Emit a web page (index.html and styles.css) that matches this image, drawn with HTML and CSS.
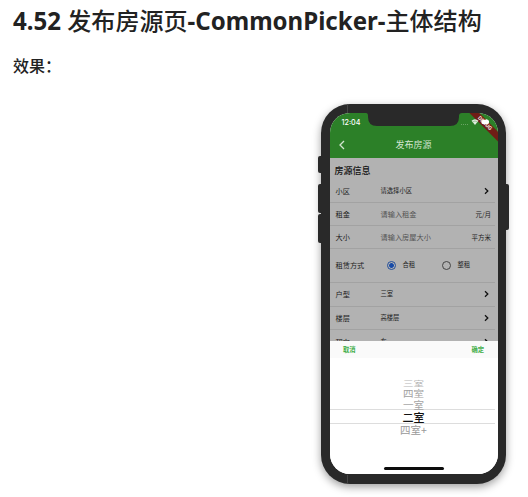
FILE: index.html
```html
<!DOCTYPE html>
<html lang="zh-CN">
<head>
<meta charset="utf-8">
<title>发布房源页</title>
<link rel="stylesheet" href="styles.css">
</head>
<body>
<h1>4.52 <span class="cjk">发布房源页</span>-CommonPicker-<span class="cjk">主体结构</span></h1>
<p class="label">效果：</p>
<div class="phone">
  <i class="key mute"></i><i class="key up"></i><i class="key down"></i><i class="key power"></i>
  <i class="seam seam-top"></i><i class="seam seam-bottom"></i>
  <div class="screen">
    <i class="debug"><b>DEBUG</b></i>
    <svg class="notch" width="96" height="14" viewBox="0 0 96 14"><path d="M0 0Q2 0 2 3V4Q2 13 11 13H84Q93 13 93 4V3Q93 0 96 0Z" fill="#292929"/></svg>
    <header>
      <div class="status">
        <span>12:04</span>
        <svg width="31" height="10" viewBox="0 0 31 10">
          <path d="M0 7.5h1m1 0h1m1 0h1m1 0h1" stroke="#69a363" stroke-width="1"/>
          <path d="M10.5 3.8Q14 .8 17.5 3.8L14 8Z" fill="#fff" opacity=".85"/>
          <path d="M11.5 5Q14 3 16.5 5" fill="none" stroke="#60a15b" stroke-width=".5"/>
          <path d="M20.5 4.5q0-1.5 1.5-1.5h2q1.5-1.6 3 0q1 .3 1 1.5v1q0 1.5-1.5 1.5H22q-1.5 0-1.5-1.5Z" fill="#fff"/>
        </svg>
      </div>
      <div class="nav">
        <svg width="8" height="10" viewBox="0 0 8 10"><path d="M6 1L2 5L6 9" fill="none" stroke="#d3e5d1" stroke-width="1.3"/></svg>
        <span>发布房源</span>
      </div>
    </header>
    <main>
      <h2>房源信息</h2>
      <div class="row first"><span class="name">小区</span><span class="value">请选择小区</span><svg class="arrow" viewBox="0 0 5 8"><path d="M1 1.3L3.8 4L1 6.7"/></svg></div>
      <div class="row"><span class="name">租金</span><span class="value hint">请输入租金</span><span class="unit">元/月</span></div>
      <div class="row"><span class="name">大小</span><span class="value hint">请输入房屋大小</span><span class="unit">平方米</span></div>
      <div class="row tall"><span class="name">租赁方式</span>
        <div class="options"><i class="radio on"></i><span>合租</span><i class="radio"></i><span>整租</span></div></div>
      <div class="row pick"><span class="name">户型</span><span class="value">三室</span><svg class="arrow" viewBox="0 0 5 8"><path d="M1 1.3L3.8 4L1 6.7"/></svg></div>
      <div class="row pick"><span class="name">楼层</span><span class="value">高楼层</span><svg class="arrow" viewBox="0 0 5 8"><path d="M1 1.3L3.8 4L1 6.7"/></svg></div>
      <div class="row last"><span class="name">朝向</span><span class="value">东</span><svg class="arrow" viewBox="0 0 5 8"><path d="M1 1.3L3.8 4L1 6.7"/></svg></div>
    </main>
    <section class="sheet">
      <div class="bar"><span>取消</span><span>确定</span></div>
      <div class="wheel">
        <div class="far">三室</div>
        <div class="mid">四室</div>
        <div class="near">一室</div>
        <div class="current">二室</div>
        <div class="next">四室+</div>
      </div>
      <div class="home"></div>
    </section>
  </div>
</div>
</body>
</html>
```
FILE: styles.css
```css
* { box-sizing: border-box; }
html, body { height: 497px; overflow: hidden; }
body {
  margin: 0;
  padding: 4px 22px 0 13px;
  background: #fff;
  color: #222;
  font-family: "Noto Sans", "Noto Sans CJK SC", sans-serif;
}
h1 { margin: 0; height: 32px; font-size: 24.05px; line-height: 32px; font-weight: 700; white-space: nowrap; }
.cjk { font-family: "Noto Sans CJK SC", sans-serif; font-weight: 500; }
.label { margin: 17px 0 0; height: 24px; font: 500 16px/24px "Noto Sans CJK SC", sans-serif; }

.phone {
  position: relative;
  width: 185px;
  height: 380px;
  margin: 27px 0 0 auto;
  padding: 9px 8.5px 9.5px;
  border-radius: 29px;
  background: #292929;
  box-shadow: 0 3px 9px rgba(0, 0, 0, .38);
}
.key { position: absolute; left: -3px; width: 5px; border-radius: 2px; background: #292929; }
.mute { top: 52px; height: 17px; }
.up { top: 80px; height: 29px; }
.down { top: 110px; height: 29px; }
.power { left: auto; right: -2.5px; top: 80px; height: 46px; }
.seam { position: absolute; left: 26px; width: 1px; height: 9px; background: #454545; }
.seam-top { top: 0; }
.seam-bottom { bottom: 0; }

.screen {
  position: relative;
  display: flex;
  flex-direction: column;
  height: 361px;
  overflow: hidden;
  border-radius: 20px;
  background: #fff;
}
.notch { position: absolute; top: 0; left: 36px; }
.debug {
  position: absolute;
  top: 7px;
  right: -14px;
  width: 54px;
  height: 6.5px;
  background: #701d16;
  transform: rotate(45deg);
  text-align: center;
  font: 700 5.5px/7px Roboto, sans-serif;
  color: #e9d6d4;
}
.debug b { display: block; }
header { height: 44.5px; flex: none; background: #2c8028; color: #fff; }
.status {
  position: relative;
  display: flex;
  justify-content: space-between;
  height: 20px;
  padding: 4px 6px 0 12px;
  font: 500 7.2px/12px Inter, sans-serif;
}
.nav { display: flex; align-items: center; height: 23px; padding-left: 8.5px; color: #d3e5d1; font: 400 9px/12px "Noto Sans CJK SC", sans-serif; }
.nav span { margin-left: 49.5px; }

main {
  height: 183.5px;
  flex: none;
  overflow: hidden;
  background: #b2b2b2;
  color: #1c1c1c;
  font-family: "Noto Sans CJK SC", sans-serif;
}
h2 { margin: 0; padding: 6px 0 0 5px; height: 21.5px; font-size: 9px; line-height: 13px; font-weight: 500; color: #111; }
.row {
  display: flex;
  align-items: center;
  height: 23px;
  margin-right: 2.5px;
  padding: 0 4px 1px 6px;
  border-bottom: 1px solid #a2a2a2;
  font-size: 7px;
  line-height: 12px;
}
.row.first { height: 24px; padding-bottom: 0; }
.tall { height: 34px; }
.row.pick { height: 23.5px; padding-bottom: 0; }
.row.last { height: 25px; }
.name { flex: none; width: 45px; font-size: 7.2px; }
.value { flex: 1; font-size: 6.3px; }
.hint { font-size: 7.2px; color: #555; }
.unit { font-size: 6.5px; }
.row .arrow { width: 5px; height: 8px; margin-right: 2.5px; fill: none; stroke: #111; stroke-width: 1.3; }
.options { display: flex; align-items: center; font-size: 6.3px; padding-left: 6px; }
.options span { padding-left: 7px; }
.options span:first-of-type { width: 46px; }
.radio { flex: none; width: 9px; height: 9px; border: 1px solid #444; border-radius: 50%; }
.on { border-color: #234f9b; background: radial-gradient(circle, #174ba8 0 2px, #b2b2b2 2.8px); }

.sheet { flex: 1; background: #fff; font-family: "Noto Sans CJK SC", sans-serif; }
.bar {
  display: flex;
  justify-content: space-between;
  height: 17px;
  padding: 0 13.5px;
  background: #fafafa;
  color: #43ae4a;
  font-size: 6.3px;
  line-height: 17px;
  font-weight: 700;
}
.wheel { height: 104px; padding-top: 19px; text-align: center; }
.wheel div { font-size: 10.5px; white-space: nowrap; }
.wheel .far { height: 12px; line-height: 14px; color: #b7b7b7; transform: scaleY(.68); }
.wheel .mid { height: 10px; line-height: 10px; color: #a0a0a0; transform: scaleY(.85); }
.wheel .near { height: 10px; line-height: 11px; color: #a5a5a5; }
.wheel .current { height: 15px; margin-right: 2.5px; padding-left: 2.5px; border: solid #ddd; border-width: 1px 0; line-height: 14px; font-size: 11px; font-weight: 500; color: #111; }
.wheel .next { height: 12px; line-height: 12px; color: #999; }
.home { width: 60px; height: 2.5px; margin: 5px auto 0; border-radius: 2px; background: #0c0c0c; }
```
